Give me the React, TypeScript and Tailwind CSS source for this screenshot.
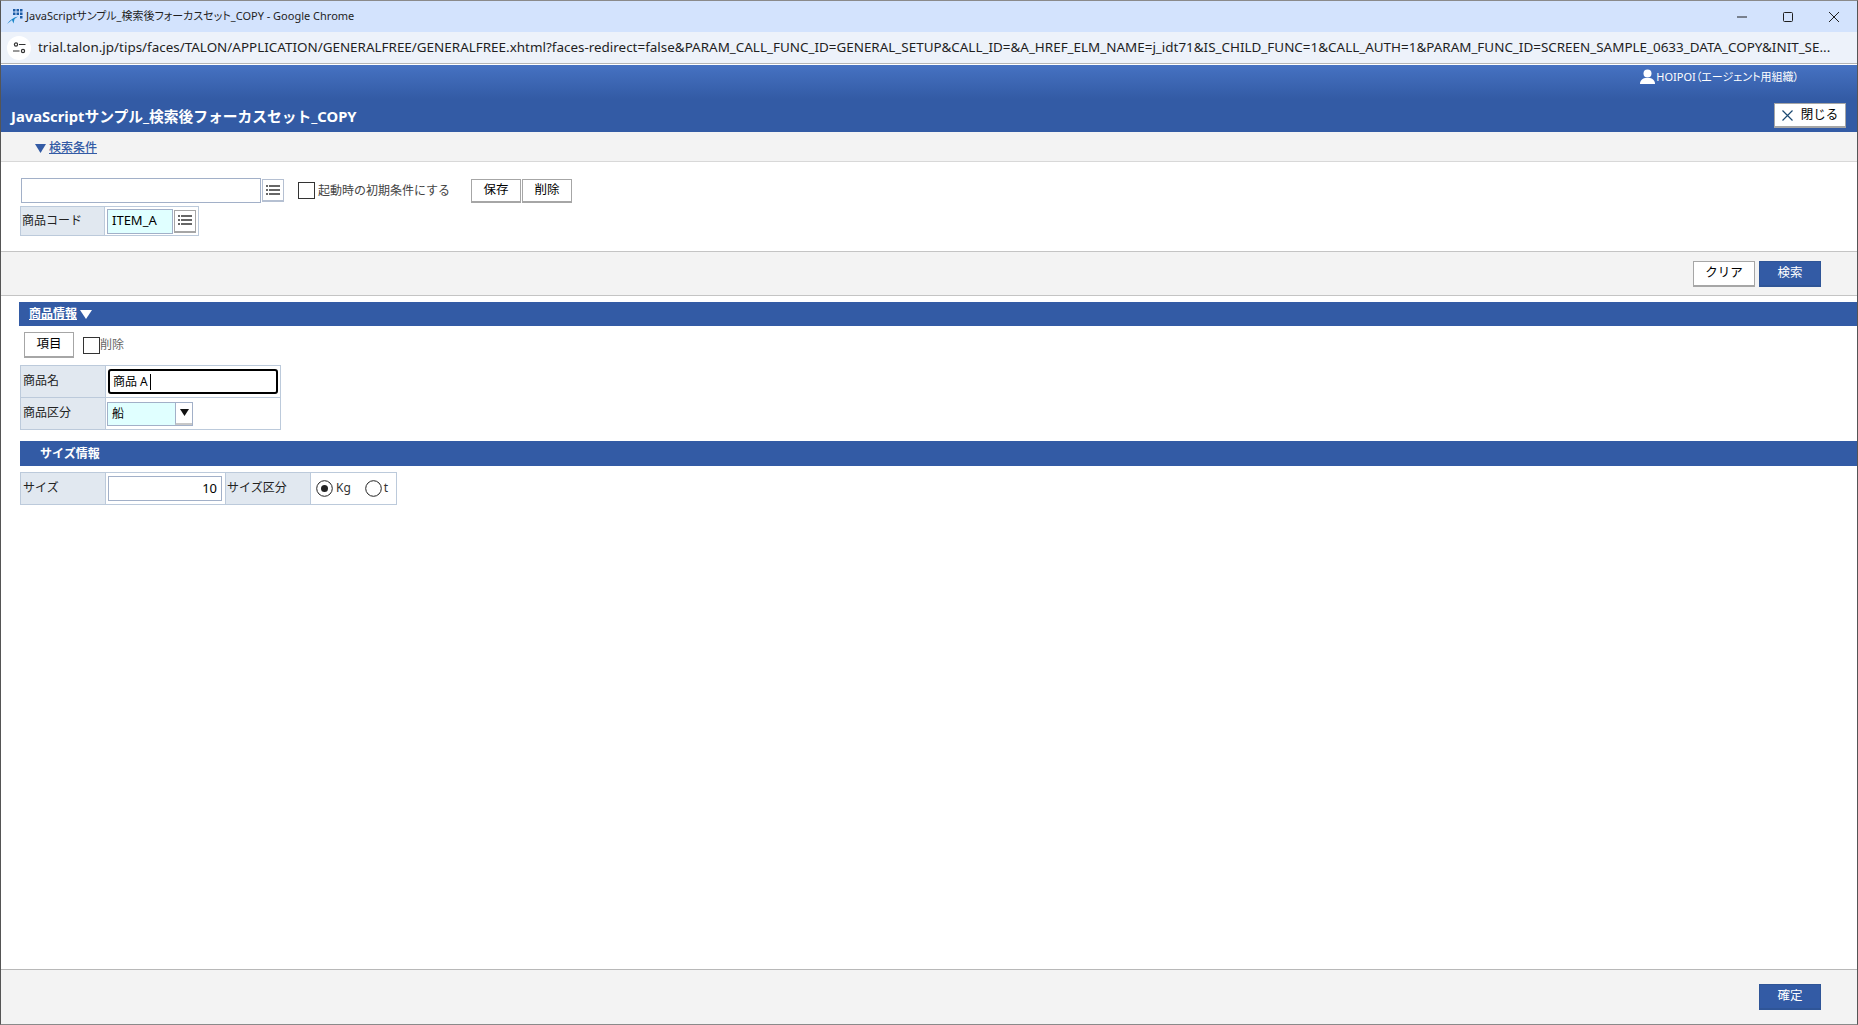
const ui = "font-['Noto_Sans','Noto_Sans_CJK_JP',sans-serif]";

function ListIcon() {
  return (
    <svg width="14" height="11" viewBox="0 0 14 11" fill="#666">
      <rect x="0" y="0" width="2" height="2" />
      <rect x="3" y="0" width="11" height="2" />
      <rect x="0" y="4" width="2" height="2" />
      <rect x="3" y="4" width="11" height="2" />
      <rect x="0" y="8" width="2" height="2" />
      <rect x="3" y="8" width="11" height="2" />
    </svg>
  );
}

function Btn({ children, className }: { children: React.ReactNode; className: string }) {
  return (
    <div className={"flex items-center justify-center bg-white border border-[#a6a6a6] border-b-2 text-[12.5px] text-black " + className}>
      {children}
    </div>
  );
}

function PrimaryBtn({ children }: { children: React.ReactNode }) {
  return (
    <div className="flex items-center justify-center w-[62px] h-[26px] bg-[#335ba5] border border-[#2f5597] border-b-2 text-[12.5px] text-white">
      {children}
    </div>
  );
}

function Label({ children, className }: { children: React.ReactNode; className: string }) {
  return <div className={"flex items-center pb-[1px] bg-[#e1e8f0] border-r border-[#bccadb] text-xs text-[#222] " + className}>{children}</div>;
}

export default function App() {
  return (
    <div className={ui + " w-[1858px] h-[1025px] flex flex-col overflow-hidden bg-white border-x border-[#555] border-t border-t-[#8a8a8a] border-b border-b-[#8a8a8a]"}>
      {/* browser title */}
      <div className="h-[31px] bg-[#d3e3fd] flex items-center shrink-0">
        <svg className="ml-[6px]" width="17" height="17" viewBox="0 0 17 17">
          <path d="M0 16 C3 12 6 9.500 11 8.500 L7.500 11 L6.500 15.500 L5 12 Z" fill="#1b86c8" />
          <g fill="#1c5ca6">
            <rect x="6" y="1" width="2.500" height="2.500" />
            <rect x="9.500" y="1" width="2.500" height="2.500" />
            <rect x="13" y="1" width="2.500" height="2.500" />
            <rect x="6" y="4.500" width="2.500" height="2.500" />
            <rect x="9.500" y="4.500" width="2.500" height="2.500" />
            <rect x="13" y="4.500" width="2.500" height="2.500" />
            <rect x="13" y="8" width="2.500" height="2.500" />
          </g>
        </svg>
        <span className="ml-[2px] text-[11px] text-[#1f1f1f] [font-feature-settings:'palt']">JavaScriptサンプル_検索後フォーカスセット_COPY - Google Chrome</span>
        <div className="ml-auto flex items-center text-[#1f1f1f]">
          <svg className="w-[46px]" height="12" viewBox="0 0 46 12"><path d="M18 6h10" stroke="#1f1f1f" /></svg>
          <svg className="w-[46px]" height="12" viewBox="0 0 46 12"><rect x="18.500" y="1.500" width="9" height="9" rx="1" fill="none" stroke="#1f1f1f" /></svg>
          <svg className="w-[46px]" height="12" viewBox="0 0 46 12"><path d="M18 1l10 10M28 1L18 11" stroke="#1f1f1f" /></svg>
        </div>
      </div>
      {/* address bar */}
      <div className="h-[32px] bg-[#edf2fa] flex items-center shrink-0 border-b border-[#b4b4b4]">
        <div className="ml-[6px] w-[24px] h-[24px] rounded-full bg-white flex items-center justify-center">
          <svg width="13" height="12" viewBox="0 0 13 12" fill="none" stroke="#333" strokeWidth="1.200">
            <circle cx="3" cy="2.500" r="1.600" />
            <path d="M6 2.500h6.500M0 9h6.500" />
            <circle cx="10" cy="9" r="1.600" />
          </svg>
        </div>
        <span className="ml-[7px] whitespace-nowrap text-[13.45px] text-[#1f1f1f]">trial.talon.jp/tips/faces/TALON/APPLICATION/GENERALFREE/GENERALFREE.xhtml?faces-redirect=false&amp;PARAM_CALL_FUNC_ID=GENERAL_SETUP&amp;CALL_ID=&amp;A_HREF_ELM_NAME=j_idt71&amp;IS_CHILD_FUNC=1&amp;CALL_AUTH=1&amp;PARAM_FUNC_ID=SCREEN_SAMPLE_0633_DATA_COPY&amp;INIT_SE...</span>
      </div>
      {/* header */}
      <div className="mt-[1px] h-[67px] shrink-0 bg-[linear-gradient(#4672c2_0px,#335ba5_34px)] flex flex-col">
        <div className="h-[20px] mt-[2px] flex items-center justify-end pr-[58px] text-[11px] text-white [font-feature-settings:'palt']">
          <svg className="mr-[1px]" width="15" height="16" viewBox="0 0 15 16" fill="#fff">
            <circle cx="7.500" cy="4.500" r="4" />
            <path d="M0 15c0-4 3-5.500 5-6h5c2 .5 5 2 5 6z" />
          </svg>
          <span>HOIPOI（エージェント用組織）</span>
        </div>
        <div className="flex-1 flex items-end justify-between pl-[10px] pr-[11px] pb-[4px]">
          <span className="mb-[1px] text-[14.75px] font-bold text-white">JavaScriptサンプル_検索後フォーカスセット_COPY</span>
          <Btn className="w-[72px] h-[25px] gap-[8px]">
            <svg width="11" height="11" viewBox="0 0 11 11"><path d="M.5.5l10 10M10.500.5l-10 10" stroke="#1c4a72" strokeWidth="1.200" /></svg>
            <span>閉じる</span>
          </Btn>
        </div>
      </div>
      {/* search condition bar */}
      <div className="h-[30px] shrink-0 bg-[#f3f3f3] border-b border-[#d8d8d8] flex items-center pl-[34px] pt-[3px] gap-[3px] text-xs font-medium text-[#335ba5]">
        <svg width="11" height="9" viewBox="0 0 11 9" fill="#335ba5"><path d="M0 0h11L5.500 9z" /></svg>
        <span className="underline">検索条件</span>
      </div>
      {/* search fields */}
      <div className="h-[90px] shrink-0 flex flex-col pl-[20px] pt-[16px] gap-[3px] border-b border-[#c4c4c4]">
        <div className="flex items-center h-[25px]">
          <div className="w-[240px] h-[25px] bg-white border border-[#a2b0c8]" />
          <Btn className="ml-[1px] w-[22px] h-[23px] border-[#b5c0d2]"><ListIcon /></Btn>
          <div className="ml-[14px] w-[17px] h-[17px] border border-[#333] bg-white" />
          <span className="ml-[3px] text-xs text-[#444]">起動時の初期条件にする</span>
          <Btn className="ml-[21px] w-[50px] h-[24px]">保存</Btn>
          <Btn className="ml-[1px] w-[50px] h-[24px]">削除</Btn>
        </div>
        <div className="flex items-stretch w-[179px] h-[30px] border border-[#bccadb] -ml-[1px]">
          <Label className="w-[84px] pl-[1px]">商品コード</Label>
          <div className="flex items-center pl-[2px] gap-[1px]">
            <div className="w-[66px] h-[25px] bg-[#e0ffff] border border-[#a2b0c8] flex items-center pl-[4px] text-[13px] text-black">ITEM_A</div>
            <Btn className="w-[22px] h-[23px] border-[#a2b0c8]"><ListIcon /></Btn>
          </div>
        </div>
      </div>
      {/* actions */}
      <div className="h-[44px] shrink-0 bg-[#f3f3f3] border-b border-[#c4c4c4] flex items-center justify-end pr-[36px] pt-[1px] gap-[4px]">
        <Btn className="w-[62px] h-[26px]">クリア</Btn>
        <PrimaryBtn>検索</PrimaryBtn>
      </div>
      {/* main */}
      <div className="flex-1 min-h-0 pl-[18px] pt-[6px] flex flex-col">
        <div className="h-[24px] shrink-0 bg-[#335ba5] flex items-center pl-[10px] gap-[3px] text-xs font-bold text-white">
          <span className="underline">商品情報</span>
          <svg width="12" height="9" viewBox="0 0 12 9" fill="#fff"><path d="M0 0h12L6 9z" /></svg>
        </div>
        <div className="mt-[6px] ml-[5px] flex items-center h-[26px]">
          <Btn className="w-[50px] h-[26px]">項目</Btn>
          <div className="ml-[9px] w-[17px] h-[17px] border border-[#333] bg-white" />
          <span className="text-xs text-[#666]">削除</span>
        </div>
        <div className="mt-[7px] ml-[1px] w-[261px] border border-[#bccadb] flex flex-col">
          <div className="flex h-[32px] border-b border-[#bccadb]">
            <Label className="w-[85px] pl-[2px]">商品名</Label>
            <div className="flex-1 flex items-center pl-[2px]">
              <div className="w-[170px] h-[25px] bg-white rounded-[3px] border-2 border-black flex items-center pl-[3px] text-xs text-black">
                商品 A<span className="ml-[2px] w-px h-[16px] bg-black" />
              </div>
            </div>
          </div>
          <div className="flex h-[31px]">
            <Label className="w-[85px] pl-[2px]">商品区分</Label>
            <div className="flex-1 flex items-center pl-[1px]">
              <div className="w-[86px] h-[24px] flex border border-[#a2b0c8] bg-[#e0ffff] text-xs text-black">
                <div className="w-[67px] flex items-center pl-[4px]">船</div>
                <div className="flex-1 bg-white border-l border-[#a2b0c8] border-b-2 border-b-[#c8c8c8] flex items-center justify-center">
                  <svg width="9" height="7" viewBox="0 0 9 7"><path d="M0 0h9L4.500 7z" fill="#111" /></svg>
                </div>
              </div>
            </div>
          </div>
        </div>
        <div className="mt-[11px] ml-[1px] h-[25px] shrink-0 bg-[#335ba5] flex items-center pl-[20px] text-xs font-bold text-white">サイズ情報</div>
        <div className="mt-[6px] ml-[1px] w-[377px] h-[33px] border border-[#bccadb] flex">
          <Label className="w-[85px] pl-[2px]">サイズ</Label>
          <div className="w-[120px] flex items-center pl-[2px] border-r border-[#bccadb]">
            <div className="w-[114px] h-[25px] border border-[#a2b0c8] bg-white flex items-center justify-end pr-[4px] text-[13px] text-black">10</div>
          </div>
          <Label className="w-[85px] pl-[1px]">サイズ区分</Label>
          <div className="flex-1 flex items-center pl-[5px] pb-[1px] text-xs text-[#333]">
            <svg width="17" height="17" viewBox="0 0 17 17" fill="none">
              <circle cx="8.500" cy="8.500" r="7.800" stroke="#222" />
              <circle cx="8.500" cy="8.500" r="3.500" fill="#222" />
            </svg>
            <span className="ml-[3px]">Kg</span>
            <svg className="ml-[14px]" width="17" height="17" viewBox="0 0 17 17" fill="none">
              <circle cx="8.500" cy="8.500" r="7.800" stroke="#222" />
            </svg>
            <span className="ml-[2px]">t</span>
          </div>
        </div>
      </div>
      {/* footer */}
      <div className="h-[55px] shrink-0 bg-[#f3f3f3] border-t border-[#b8b8b8] flex items-start justify-end pt-[14px] pr-[36px]">
        <PrimaryBtn>確定</PrimaryBtn>
      </div>
    </div>
  );
}
